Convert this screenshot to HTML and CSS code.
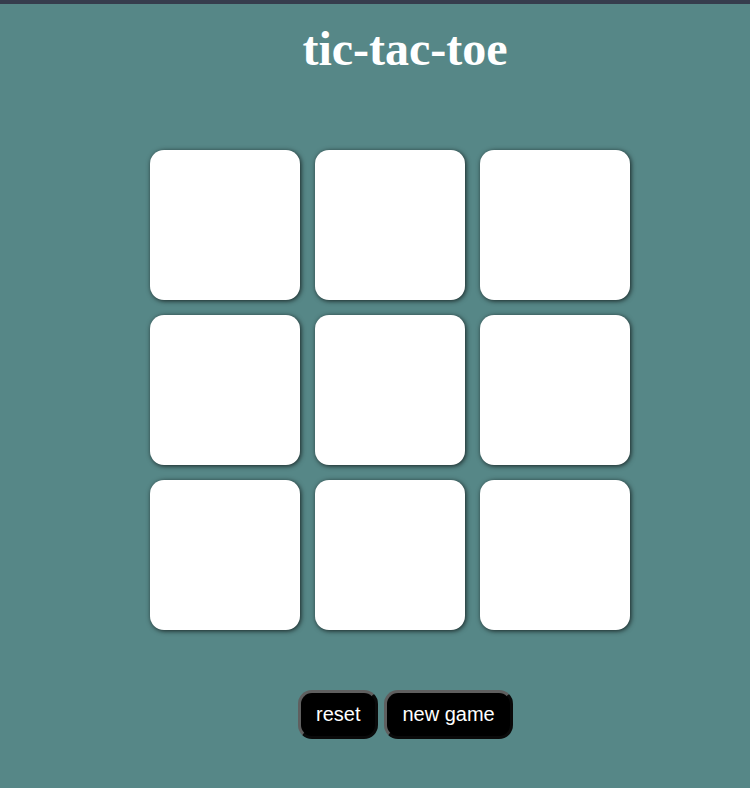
FILE: index.html
```html
<!DOCTYPE html>
<html>
<head>
<meta charset="utf-8">
<link rel="stylesheet" href="styles.css">
</head>
<body>
<div class="page">
  <h1 class="title">tic-tac-toe</h1>
  <div class="board">
    <div class="cell"></div><div class="cell"></div><div class="cell"></div>
    <div class="cell"></div><div class="cell"></div><div class="cell"></div>
    <div class="cell"></div><div class="cell"></div><div class="cell"></div>
  </div>
  <div class="controls">
    <button class="btn">reset</button>
    <button class="btn">new game</button>
  </div>
</div>
</body>
</html>
```
FILE: styles.css
```css
html, body {
  margin: 0;
  padding: 0;
  height: 100%;
}
body {
  background: #568787;
  border-top: 4px solid #363d4d;
  box-sizing: border-box;
  overflow: hidden;
}
.page {
  display: flex;
  flex-direction: column;
}
.title {
  margin: 17px 0 0 60px;
  font-family: "Liberation Serif", "Times New Roman", serif;
  font-weight: bold;
  font-size: 48px;
  line-height: 56px;
  color: #ffffff;
  text-align: center;
}
.board {
  margin: 73px 0 0 150px;
  display: grid;
  grid-template-columns: repeat(3, 150px);
  grid-template-rows: repeat(3, 150px);
  gap: 15px;
}
.cell {
  background: #ffffff;
  border-radius: 14px;
  box-shadow: 1px 1px 5px rgba(0, 0, 0, 0.75);
}
.controls {
  margin: 60px 0 0 298px;
  display: flex;
  gap: 6px;
}
.btn {
  height: 49px;
  padding: 0 15px;
  background: #000000;
  color: #ffffff;
  font-family: "Liberation Sans", Arial, sans-serif;
  font-size: 20px;
  border: 3px outset #5f5f5f;
  border-radius: 14px;
  cursor: pointer;
}
```
